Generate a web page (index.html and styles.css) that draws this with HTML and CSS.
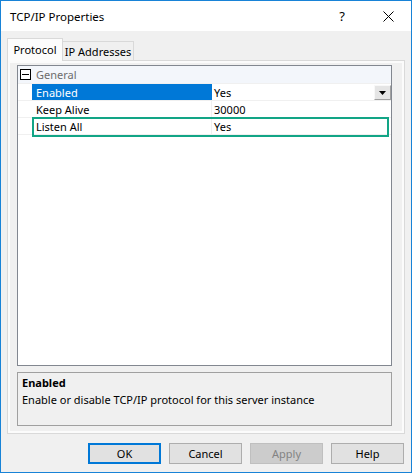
FILE: index.html
```html
<!DOCTYPE html>
<html>
<head>
<meta charset="utf-8">
<title>TCP/IP Properties</title>
<link rel="stylesheet" href="styles.css">
</head>
<body>
<div class="window">
  <div class="titlebar">
    <span class="title">TCP/IP Properties</span>
    <span class="cap-btn help">?</span>
    <span class="cap-btn close"><svg width="11" height="11" viewBox="0 0 11 11"><path d="M0.5 0.5L10.5 10.5M10.5 0.5L0.5 10.5" stroke="#000" stroke-width="1"/></svg></span>
  </div>
  <div class="client">
    <div class="tabs">
      <div class="tab active">Protocol</div>
      <div class="tab">IP Addresses</div>
    </div>
    <div class="panel">
      <div class="grid">
        <div class="cat-row"><span class="expander"></span><span class="cat-label">General</span></div>
        <div class="prop selected"><span class="gutter"></span><span class="name">Enabled</span><span class="value"><span class="val-text">Yes</span><span class="dd"><svg width="7" height="4" viewBox="0 0 7 4"><path d="M0 0H7L3.5 4Z" fill="#000"/></svg></span></span></div>
        <div class="prop"><span class="gutter"></span><span class="name">Keep Alive</span><span class="value"><span class="val-text">30000</span></span></div>
        <div class="prop"><span class="gutter"></span><span class="name">Listen All</span><span class="value"><span class="val-text">Yes</span></span></div>
        <div class="highlight"></div>
      </div>
      <div class="desc">
        <div class="desc-title">Enabled</div>
        <div class="desc-text">Enable or disable TCP/IP protocol for this server instance</div>
      </div>
    </div>
    <div class="buttons">
      <button class="btn default">OK</button>
      <button class="btn">Cancel</button>
      <button class="btn disabled">Apply</button>
      <button class="btn">Help</button>
    </div>
  </div>
</div>
</body>
</html>
```
FILE: styles.css
```css
* { box-sizing: border-box; }
html, body { margin: 0; padding: 0; background: #ffffff; }
body {
  font-family: "Noto Sans", "Open Sans", sans-serif;
  font-size: 11px;
  color: #000;
}
.window {
  width: 412px;
  height: 473px;
  border: 1px solid #1883d7;
  background: #f0f0f0;
  display: flex;
  flex-direction: column;
}
.titlebar {
  height: 30px;
  background: #ffffff;
  display: flex;
  align-items: center;
  flex: none;
}
.title {
  padding-left: 9px;
  font-size: 11.5px;
  margin-right: auto;
}
.cap-btn {
  width: 46px;
  height: 30px;
  display: flex;
  align-items: center;
  justify-content: center;
}
.help { font-size: 13px; }
.client {
  flex: 1;
  padding: 7px 6px 0 6px;
  display: flex;
  flex-direction: column;
}
.tabs {
  display: flex;
  align-items: flex-start;
  height: 22px;
  position: relative;
  z-index: 2;
}
.tab {
  display: flex;
  align-items: center;
  justify-content: center;
  border: 1px solid #d9d9d9;
  border-bottom: none;
}
.tab.active {
  width: 56px;
  height: 23px;
  background: #fcfcfc;
  padding-bottom: 1px;
}
.tab:not(.active) {
  margin-top: 3px;
  width: 71px;
  height: 19px;
  border-left: none;
  background: #f0f0f0;
  padding-top: 1px;
}
.panel {
  width: 398px;
  height: 374px;
  border: 1px solid #d9d9d9;
  background: #f0f0f0;
  box-shadow: inset 0 0 0 2px #fbfbfb;
  padding: 4px 12px 7px 9px;
  display: flex;
  flex-direction: column;
  gap: 6px;
}
.grid {
  height: 301px;
  border: 1px solid #828790;
  background: #ffffff;
  position: relative;
  flex: none;
}
.cat-row {
  height: 18px;
  background: #f3f6fb;
  border-bottom: 1px solid #f0f0f0;
  display: flex;
  align-items: center;
  position: relative;
}
.expander {
  position: absolute;
  left: 2px;
  top: 3px;
  width: 11px;
  height: 11px;
  border: 1px solid #000;
  background: #fff;
}
.expander::after {
  content: "";
  position: absolute;
  left: 1px;
  top: 4px;
  width: 7px;
  height: 1px;
  background: #000;
}
.cat-label {
  padding-left: 18px;
  color: #6d6d6d;
}
.prop {
  height: 17px;
  display: flex;
  border-bottom: 1px solid #f0f0f0;
}
.gutter {
  width: 14px;
  flex: none;
}
.name {
  width: 180px;
  flex: none;
  padding-left: 4px;
  border-right: 1px solid #f0f0f0;
  display: flex;
  align-items: center;
}
.prop.selected .name {
  background: #0078d7;
  color: #ffffff;
  border-right-color: #0078d7;
}
.value {
  flex: 1;
  display: flex;
  align-items: center;
  padding-left: 2px;
}
.val-text { margin-right: auto; }
.dd {
  width: 17px;
  height: 15px;
  margin-top: 1px;
  background: #e5e5e5;
  border: 1px solid;
  border-color: #f8f8f8 #a0a0a0 #a0a0a0 #f8f8f8;
  display: flex;
  align-items: center;
  justify-content: center;
}
.highlight {
  position: absolute;
  left: 14px;
  top: 51px;
  width: 357px;
  height: 20px;
  border: 2px solid #12a586;
}
.desc {
  height: 54px;
  border: 1px solid #a0a0a0;
  background: #f0f0f0;
  padding: 1px 4px 0 4px;
  line-height: 17px;
  flex: none;
}
.desc-title { font-weight: bold; }
.buttons {
  margin-top: 9px;
  display: flex;
  justify-content: flex-end;
  gap: 8px;
  padding-right: 1px;
}
.btn {
  width: 73px;
  height: 21px;
  background: #e1e1e1;
  border: 1px solid #adadad;
  font-family: "Noto Sans", "Open Sans", sans-serif;
  font-size: 11px;
  color: #000;
  padding: 0;
  margin: 0;
}
.btn.default { border: 2px solid #0078d7; }
.btn.disabled {
  background: #cccccc;
  border-color: #bfbfbf;
  color: #838383;
}
```
